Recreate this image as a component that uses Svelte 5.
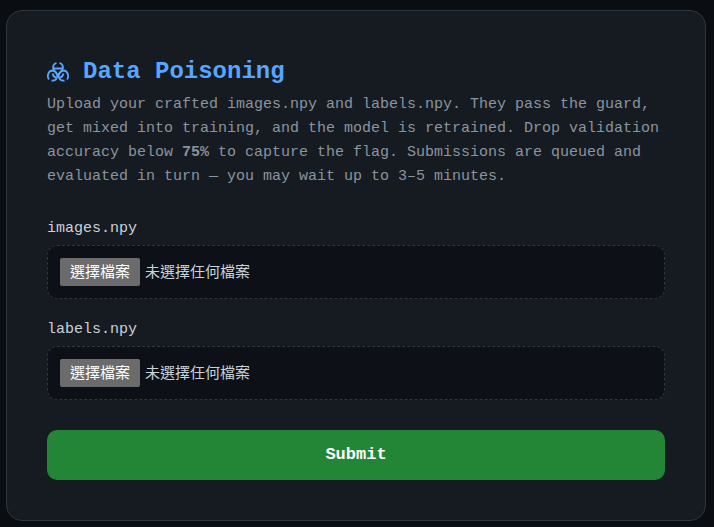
<script lang="ts">
  type Slot = { id: string; label: string; fileName: string };

  let slots: Slot[] = $state([
    { id: "images", label: "images.npy", fileName: "" },
    { id: "labels", label: "labels.npy", fileName: "" },
  ]);

  const pickFile = (slot: Slot, event: any) => {
    slot.fileName = event.currentTarget.files[0]?.name ?? "";
  };
</script>

<main>
  <form class="card" onsubmit={(event) => event.preventDefault()}>
    <h1>
      <svg viewBox="0 0 22 20" width="22" height="20" aria-hidden="true">
        <path d="M9.500 1C5.500 2 5 7 8 9.500L11 13.500L14 9.500C17 7 16.500 2 12.500 1" />
        <path d="M2 17.500C0 15 .5 9.500 5 8.500C9 8.500 11 12 10 15.500C9 18.500 7 19 4.500 18.500" />
        <path d="M20 17.500C22 15 21.500 9.500 17 8.500C13 8.500 11 12 12 15.500C13 18.500 15 19 17.500 18.500" />
        <path d="M7 6.500H15M5.500 11.500Q6 14.500 9 16M16.500 11.500Q16 14.500 13 16" />
      </svg>
      <span>Data Poisoning</span>
    </h1>
    <p>
      Upload your crafted images.npy and labels.npy. They pass the guard, get
      mixed into training, and the model is retrained. Drop validation accuracy
      below <strong>75%</strong> to capture the flag. Submissions are queued and
      evaluated in turn — you may wait up to 3–5 minutes.
    </p>

    {#each slots as slot (slot.id)}
      <div class="field">
        <label for={slot.id}>{slot.label}</label>
        <div class="picker">
          <input id={slot.id} type="file" accept=".npy" onchange={(event) => pickFile(slot, event)} />
          <span class="choose">選擇檔案</span>
          <span class="status">{slot.fileName || "未選擇任何檔案"}</span>
        </div>
      </div>
    {/each}

    <button type="submit">Submit</button>
  </form>
</main>

<style>
  :global(body) {
    background: #0a0d12;
  }

  main {
    padding: 10px 8px 6px 6px;
    font-family: "Liberation Mono", "Noto Sans CJK TC", monospace;
    font-size: 15px;
    line-height: 24px;
    color: #c9d1d9;
  }

  .card {
    display: flex;
    flex-direction: column;
    max-width: 900px;
    margin: 0 auto;
    padding: 40px;
    background: #161b22;
    border: 1px solid #30363d;
    border-radius: 16px;
  }

  h1 {
    display: flex;
    align-items: center;
    gap: 14px;
    margin: 0;
    font-size: 24px;
    line-height: 42px;
    color: #58a6ff;
  }

  svg {
    fill: none;
    stroke: currentColor;
    stroke-width: 1.8;
  }

  p {
    margin: 0 0 28px;
    color: #8b949e;
  }

  .field {
    display: flex;
    flex-direction: column;
    gap: 4px;
    margin-bottom: 19px;
  }

  .picker {
    position: relative;
    display: flex;
    align-items: center;
    gap: 5px;
    padding: 12px;
    background: #0d1117;
    border: 1px dashed #30363d;
    border-radius: 10px;
  }

  /* the native control stays clickable on top of its translated text */
  .picker input {
    position: absolute;
    inset: 0;
    width: 100%;
    opacity: 0;
    cursor: pointer;
  }

  .choose,
  .status {
    padding-top: 4px;
  }

  .choose {
    padding-inline: 10px;
    background: #6b6b6b;
    border-radius: 2px;
    color: #fff;
  }

  button {
    margin-top: 11px;
    padding: 13px;
    background: #238636;
    border: none;
    border-radius: 10px;
    color: #fff;
    font-family: inherit;
    font-size: 17px;
    font-weight: 700;
    line-height: 24px;
    cursor: pointer;
  }

  button:hover {
    background: #2ea043;
  }
</style>
